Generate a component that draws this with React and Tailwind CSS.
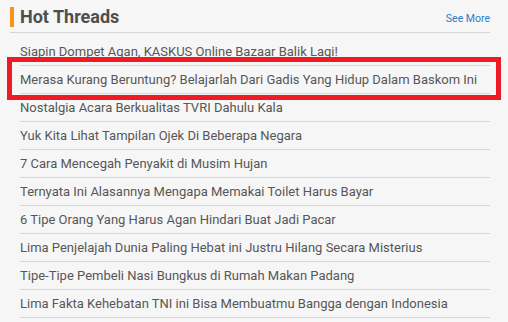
import React from "react";

const threads = [
  "Siapin Dompet Agan, KASKUS Online Bazaar Balik Lagi!",
  "Merasa Kurang Beruntung? Belajarlah Dari Gadis Yang Hidup Dalam Baskom Ini",
  "Nostalgia Acara Berkualitas TVRI Dahulu Kala",
  "Yuk Kita Lihat Tampilan Ojek Di Beberapa Negara",
  "7 Cara Mencegah Penyakit di Musim Hujan",
  "Ternyata Ini Alasannya Mengapa Memakai Toilet Harus Bayar",
  "6 Tipe Orang Yang Harus Agan Hindari Buat Jadi Pacar",
  "Lima Penjelajah Dunia Paling Hebat ini Justru Hilang Secara Misterius",
  "Tipe-Tipe Pembeli Nasi Bungkus di Rumah Makan Padang",
  "Lima Fakta Kehebatan TNI ini Bisa Membuatmu Bangga dengan Indonesia",
];

export default function App() {
  return (
    <div
      className="relative w-[508px] h-[322px] overflow-hidden bg-[#f6f6f6] pt-[7px]"
      style={{ fontFamily: "Roboto, 'Liberation Sans', sans-serif" }}
    >
      <div className="ml-[10px] w-[480px] flex items-end justify-between border-b border-[#d6d6d6] pb-[5px]">
        <div className="flex items-center">
          <div className="w-[4px] h-[20px] bg-[#f7941d]" />
          <h2 className="ml-[6px] text-[18px] leading-[20px] font-bold text-[#4e4e4e]">
            Hot Threads
          </h2>
        </div>
        <a className="text-[10.5px] leading-[12px] text-[#2f7cc4] mb-[2px]">See More</a>
      </div>
      <ul className="ml-[20px] w-[470px] mt-[5px]">
        {threads.map((t) => (
          <li
            key={t}
            className="h-[28px] border-b border-[#d6d6d6] text-[13px] leading-[27px] text-[#575757] whitespace-nowrap"
          >
            {t}
          </li>
        ))}
      </ul>
      <div className="absolute left-[7px] top-[57px] w-[494px] h-[43px] border-[5px] border-[#ed1c24]" />
    </div>
  );
}
